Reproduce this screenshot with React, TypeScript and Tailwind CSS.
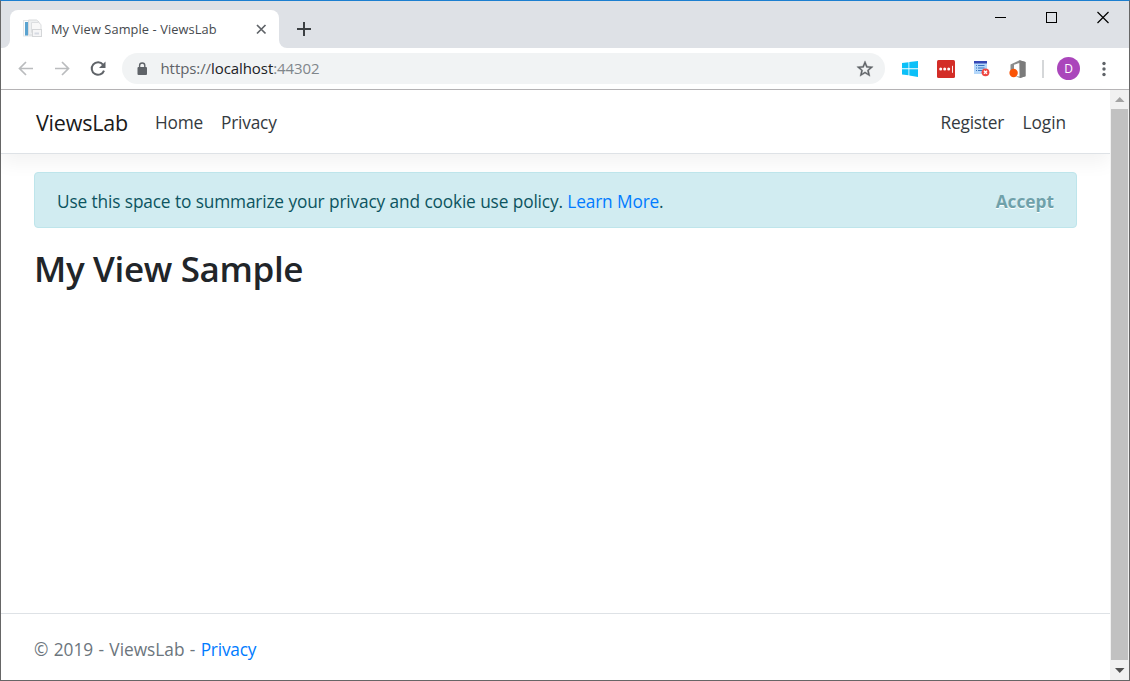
import React from "react";

function Favicon() {
  return (
    <svg width="20" height="20" viewBox="0 0 20 20" className="shrink-0">
      <rect x=".5" y="1.500" width="10" height="15.500" fill="#fbfcfc" stroke="#e3e6e8" />
      <rect x="2" y="3" width="3" height="13.500" fill="#5aa3d0" />
      <path d="M5.500 1h8l2.500 2v13H5.500z" fill="#eef0f1" stroke="#d8dadc" />
      <path d="M8.500 3.500h7l2.500 2v8H8.500z" fill="#f8f8f8" stroke="#dcdee0" />
      <rect x="9.500" y="10.500" width="9" height="7" fill="#f6f6f7" stroke="#d4d6d8" />
      <path d="M11.500 14.500h4.500" stroke="#d6dae2" strokeWidth="2" />
    </svg>
  );
}

function TitleBar() {
  return (
    <div className="flex h-[47px] items-end bg-[#dee1e6]">
      <div className="flex h-[38px] w-[9px] flex-col justify-end bg-white">
        <div className="h-full w-full rounded-br-[8px] bg-[#dee1e6]" />
      </div>
      <div className="flex h-[38px] w-[269px] items-center rounded-t-[8px] bg-white pl-[13px] text-[12.800px] text-[#45494d]">
        <Favicon />
        <span className="ml-2 w-[210px] pt-px tracking-[0.1px] whitespace-nowrap">My View Sample - ViewsLab</span>
        <svg width="12" height="12" viewBox="0 0 12 12" className="mr-[12px] shrink-0">
          <path d="M2 2l8.500 8.500M10.500 2L2 10.500" stroke="#5f6368" strokeWidth="1.700" />
        </svg>
      </div>
      <div className="h-[38px] w-[9px] bg-white">
        <div className="h-full w-full rounded-bl-[8px] bg-[#dee1e6]" />
      </div>
      <svg width="16" height="16" viewBox="0 0 16 16" className="mb-[11px] ml-[8px]">
        <path d="M8 1v14M1 8h14" stroke="#3c4043" strokeWidth="2" />
      </svg>
      <svg width="120" height="14" viewBox="0 0 120 14" className="mr-[18px] mb-[24px] ml-auto" fill="none" stroke="#000">
        <path d="M4 7.500h11" />
        <rect x="55.500" y="2.500" width="10" height="10" />
        <path d="M106.500 2l11 11M117.500 2l-11 11" strokeWidth="1.200" />
      </svg>
    </div>
  );
}

function Toolbar() {
  return (
    <div className="flex h-[41px] items-center bg-white pl-[17px]">
      <svg width="16" height="16" viewBox="0 0 16 16" fill="none" stroke="#babcbe" strokeWidth="1.700">
        <path d="M15 7.500H2M8 1L1.500 7.500 8 14" />
      </svg>
      <svg width="16" height="16" viewBox="0 0 16 16" className="ml-5" fill="none" stroke="#babcbe" strokeWidth="1.700">
        <path d="M1 7.500h13M8 1L14.500 7.500 8 14" />
      </svg>
      <svg width="16" height="16" viewBox="0 0 16 16" className="ml-5" fill="none">
        <path d="M13 3.600A6.300 6.300 0 1 0 14 9.600" stroke="#5f6368" strokeWidth="2" />
        <path d="M15.500 0.500v6.500H9z" fill="#5f6368" />
      </svg>
      <div className="ml-[16px] flex h-[31px] w-[763px] items-center rounded-full bg-[#f1f3f4] pr-[11px] pl-[14px]">
        <svg width="12" height="14" viewBox="0 0 12 14">
          <rect x="1.500" y="5" width="9.500" height="8" rx="1" fill="#5f6368" />
          <path d="M3.600 5.500V3.600a2.600 2.600 0 0 1 5.200 0v1.900" fill="none" stroke="#5f6368" strokeWidth="1.400" />
        </svg>
        <span className="ml-[12.500px] text-[15px] tracking-[-0.080px] text-[#80868b]">
          <span className="text-[#5f6368]">https://</span>
          <span className="text-[#202124]">localhost</span>:44302
        </span>
        <svg width="18" height="18" viewBox="1 1 22 22" className="ml-auto" fill="#5f6368">
          <path d="M22 9.240l-7.190-.62L12 2 9.190 8.630 2 9.240l5.460 4.730L5.820 21 12 17.270 18.180 21l-1.630-7.030L22 9.240zM12 15.400l-3.760 2.270 1-4.280-3.320-2.880 4.380-.38L12 6.100l1.710 4.040 4.380.38-3.320 2.880 1 4.280L12 15.400z" stroke="#5f6368" strokeWidth=".4" />
        </svg>
      </div>
      <svg width="18" height="18" viewBox="0 0 18 18" className="ml-4" fill="#0cc0f8">
        <path d="M1 3l6.500-.8v6H1zM8.300 2L17 1v7.200H8.300zM1 9.300h6.500v6L1 14.500zM8.300 9.300H17V17l-8.700-1.500z" />
      </svg>
      <svg width="18" height="18" viewBox="0 0 18 18" className="ml-[18px]">
        <rect width="18" height="18" y="0" rx="1.500" fill="#d32d27" />
        <g fill="#fff">
          <circle cx="3.700" cy="9" r="1.500" />
          <circle cx="7.700" cy="9" r="1.500" />
          <circle cx="11.700" cy="9" r="1.500" />
          <rect x="15" y="5.800" width=".9" height="7" />
        </g>
      </svg>
      <svg width="18" height="18" viewBox="0 0 18 18" className="ml-[18px]">
        <rect x="1" y="1" width="13" height="13" fill="#b4d7fa" />
        <rect x="1" y="1" width="13" height="2.500" fill="#3548b5" />
        <path d="M3 5.500h1M5 5.500h6.500M3 8h1M5 8h6.500M3 10.500h1M5 10.500h4" stroke="#3975c0" strokeWidth="1.200" />
        <circle cx="12.500" cy="12.300" r="3.900" fill="#ee4640" />
        <path d="M11 10.800l3 3M14 10.800l-3 3" stroke="#fff" strokeWidth="1.400" />
      </svg>
      <svg width="18" height="18" viewBox="0 0 18 18" className="ml-[18px]">
        <path d="M1.500 4.500L10.500 .3 16.500 2v14.200L11 18 6.500 16.200l4 .3V3L5 4.700v6L1.500 12z" fill="#8c8c8c" />
        <path d="M10.500 .3l6 1.700v14.200L11 18z" fill="#7b7b7b" />
        <circle cx="4.600" cy="13" r="4.200" fill="#fa5305" />
      </svg>
      <div className="ml-[15px] h-[18px] w-[1.500px] bg-[#d5d7d9]" />
      <div className="ml-[13.500px] flex size-[23px] items-center justify-center rounded-full bg-[#aa46bb] text-[12px] text-white">D</div>
      <svg width="6" height="18" viewBox="0 0 6 18" className="ml-[21px]" fill="#5f6368">
        <circle cx="3" cy="3.500" r="1.700" />
        <circle cx="3" cy="9" r="1.700" />
        <circle cx="3" cy="14.500" r="1.700" />
      </svg>
    </div>
  );
}

function Scrollbar() {
  return (
    <div className="flex w-[19px] flex-col bg-[#f1f1f1] pr-px pl-px">
      <svg width="17" height="19" viewBox="0 0 17 19" className="shrink-0">
        <path d="M4 12h9.500L8.750 7z" fill="#a3a3a3" />
      </svg>
      <div className="w-[17px] grow bg-[#c1c1c1]" />
      <svg width="17" height="20" viewBox="0 0 17 20" className="shrink-0">
        <path d="M4 8h9.500L8.750 13z" fill="#505050" />
      </svg>
    </div>
  );
}

function Page() {
  return (
    <div className="flex grow flex-col bg-white text-[17.300px] leading-[27px] text-[#212529]">
      <header className="flex h-[64px] shrink-0 items-center border-b border-[#dee2e6] pt-px pr-[44px] pl-[35px] tracking-[-0.200px] text-[#343a40] shadow-[0_9px_18px_rgba(0,0,0,0.05)]">
        <a className="w-[119px] text-[21.500px] tracking-[-0.2px] text-[#1a1a1a]">ViewsLab</a>
        <a className="w-[66px]">Home</a>
        <a>Privacy</a>
        <a className="ml-auto w-[82px]">Register</a>
        <a className="tracking-[-0.050px]">Login</a>
      </header>
      <main className="grow pt-[18px] pr-[33px] pl-[33px]">
        <div className="flex h-[56px] items-center justify-between rounded-[4px] border border-[#bee5eb] bg-[#d1ecf1] pt-[2px] pr-[22px] pl-[22px] text-[#0c5460]">
          <p className="tracking-[-0.170px] [word-spacing:0.250px]">
            Use this space to summarize your privacy and cookie use policy. <a className="text-[#007bff]">Learn More</a>.
          </p>
          <button className="font-bold text-[#6fa1aa] [text-shadow:0_1px_0_#fff]">Accept</button>
        </div>
        <h1 className="mt-[19px] text-[35px] leading-[43px] font-semibold tracking-[-0.350px]">My View Sample</h1>
      </main>
      <footer className="flex h-[67px] shrink-0 items-center border-t border-[#dee2e6] pt-[4px] pl-[33px] text-[#6c757d]">
        <p className="[word-spacing:0.8px]">
          © 2019 - ViewsLab - <a className="tracking-[-0.200px] text-[#007bff]">Privacy</a>
        </p>
      </footer>
    </div>
  );
}

export default function App() {
  return (
    <div className="flex h-[681px] w-[1130px] flex-col overflow-hidden border border-[#666] border-t-[#1c7fd0] font-['Open_Sans','Noto_Sans',sans-serif]">
      <TitleBar />
      <Toolbar />
      <div className="h-px shrink-0 bg-[#b6b4b6]" />
      <div className="flex min-h-0 grow">
        <Page />
        <Scrollbar />
      </div>
    </div>
  );
}
